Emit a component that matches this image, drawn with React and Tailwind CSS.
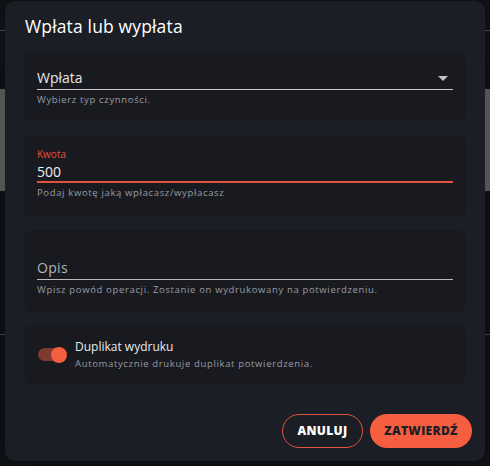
import React, { useState } from "react";

const font = { fontFamily: '"Open Sans", "Liberation Sans", sans-serif' };

function Helper({ children }) {
  return <p className="mt-[3px] text-[9.5px] leading-[14px] tracking-[0.65px] text-[#9a9ca3]">{children}</p>;
}

function Card({ className = "", children }) {
  return <div className={`rounded-[8px] bg-[#181a20] px-[13px] ${className}`}>{children}</div>;
}

export default function App() {
  const [duplicate, setDuplicate] = useState(true);

  return (
    <div className="relative h-[466px] w-[490px] overflow-hidden bg-[#101115]" style={font}>
      {/* page behind the dialog */}
      <div className="mt-[30px] h-px bg-[#45464b]" />
      <div className="mt-[58px] h-[102px] bg-[#5c5c5e]" />
      <div className="mt-[143px] h-px bg-[#3d3e43]" />

      <div className="absolute left-[5px] top-[1px] flex h-[460px] w-[480px] flex-col rounded-[10px] bg-[#1c1e25] px-[19px] pt-[13px] shadow-2xl">
        <h2 className="pl-[1px] text-[17.5px] font-medium leading-[24px] tracking-[0.15px] text-white">Wpłata lub wypłata</h2>

        <div className="mt-[14px] flex flex-col">
          <Card className="h-[69px] pt-[15px]">
            <div className="flex h-[23px] items-center justify-between border-b border-[#c9cacd] pb-[1px]">
              <span className="text-[14px] text-[#e6e7e9]">Wpłata</span>
              <svg width="24" height="24" viewBox="0 0 24 24" className="-mr-[2px] text-[#c0c1c4]">
                <path d="M7 10l5 5 5-5z" fill="currentColor" />
              </svg>
            </div>
            <Helper>Wybierz typ czynności.</Helper>
          </Card>

          <Card className="mt-[14px] h-[82px] pt-[12px]">
            <label className="block text-[10px] leading-[14px] text-[#e0533f]">Kwota</label>
            <div className="flex h-[22px] items-center border-b-2 border-[#e0533f]">
              <span className="text-[14px] text-[#eeeff1]">500</span>
            </div>
            <Helper>Podaj kwotę jaką wpłacasz/wypłacasz</Helper>
          </Card>

          <Card className="mt-[13px] h-[82px] pt-[26px]">
            <div className="flex h-[24px] items-center border-b border-[#b9babd]">
              <span className="text-[14px] tracking-[0.3px] text-[#b4b6ba]">Opis</span>
            </div>
            <Helper>Wpisz powód operacji. Zostanie on wydrukowany na potwierdzeniu.</Helper>
          </Card>

          <Card className="mt-[13px] flex h-[59px] items-center">
            <button
              type="button"
              onClick={() => setDuplicate(!duplicate)}
              className="relative ml-[1px] h-[13px] w-[23px] rounded-full bg-[#7d3a2f]"
            >
              <span
                className={`absolute top-1/2 h-[16px] w-[16px] -translate-y-1/2 rounded-full bg-[#f45f40] ${duplicate ? "left-[13px]" : "-left-[3px]"}`}
              />
            </button>
            <div className="ml-[14px] flex flex-col">
              <span className="text-[12px] leading-[17px] text-[#e8e9eb]">Duplikat wydruku</span>
              <span className="mt-[2px] text-[9.5px] leading-[14px] tracking-[0.65px] text-[#9a9ca3]">
                Automatycznie drukuje duplikat potwierdzenia.
              </span>
            </div>
          </Card>
        </div>

        <div className="mt-auto mb-[13px] -mr-[6px] flex justify-end gap-[7px]">
          <button
            type="button"
            className="h-[34px] w-[81px] rounded-full border border-[#e0533f] text-[12px] font-extrabold tracking-[0.3px] text-white"
          >
            ANULUJ
          </button>
          <button
            type="button"
            className="h-[34px] w-[102px] rounded-full bg-[#f55f40] text-[12px] font-extrabold tracking-[0.3px] text-[#1c1e25]"
          >
            ZATWIERDŹ
          </button>
        </div>
      </div>
    </div>
  );
}
